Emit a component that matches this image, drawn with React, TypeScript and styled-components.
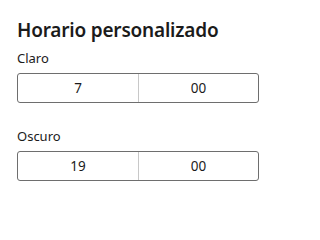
import React from "react";
import styled, { createGlobalStyle } from "styled-components";

const GlobalStyle = createGlobalStyle`
  html, body {
    margin: 0;
    padding: 0;
    background: #ffffff;
  }
  body {
    font-family: "Noto Sans", "Open Sans", sans-serif;
    color: #1b1b1b;
  }
`;

const Panel = styled.div`
  display: flex;
  flex-direction: column;
  padding: 18px 0 0 17px;
  width: 312px;
  height: 213px;
  box-sizing: border-box;
`;

const Title = styled.h2`
  margin: 0 0 7px 0;
  font-size: 19px;
  font-weight: 600;
  line-height: 24px;
  letter-spacing: -0.2px;
`;

const Field = styled.div<{ gap: number }>`
  display: flex;
  flex-direction: column;
  margin-bottom: ${(p) => p.gap}px;
`;

const Label = styled.label`
  font-size: 13px;
  line-height: 18px;
  margin-bottom: 6px;
`;

const TimeBox = styled.div`
  display: grid;
  grid-template-columns: 120px 1fr;
  width: 242px;
  height: 30px;
  box-sizing: border-box;
  border: 1px solid #6e6e6e;
  border-radius: 3px;
`;

const Cell = styled.div<{ divider?: boolean }>`
  display: flex;
  align-items: center;
  justify-content: center;
  font-size: 13.5px;
  color: #1b1b1b;
  border-left: ${(p) => (p.divider ? "1px solid #c8c8c8" : "none")};
`;

interface TimeFieldProps {
  label: string;
  hour: string;
  minute: string;
  gap: number;
}

const TimeField: React.FC<TimeFieldProps> = ({ label, hour, minute, gap }) => (
  <Field gap={gap}>
    <Label>{label}</Label>
    <TimeBox>
      <Cell>{hour}</Cell>
      <Cell divider>{minute}</Cell>
    </TimeBox>
  </Field>
);

export default function App() {
  return (
    <>
      <GlobalStyle />
      <Panel>
        <Title>Horario personalizado</Title>
        <TimeField label="Claro" hour="7" minute="00" gap={24} />
        <TimeField label="Oscuro" hour="19" minute="00" gap={0} />
      </Panel>
    </>
  );
}
